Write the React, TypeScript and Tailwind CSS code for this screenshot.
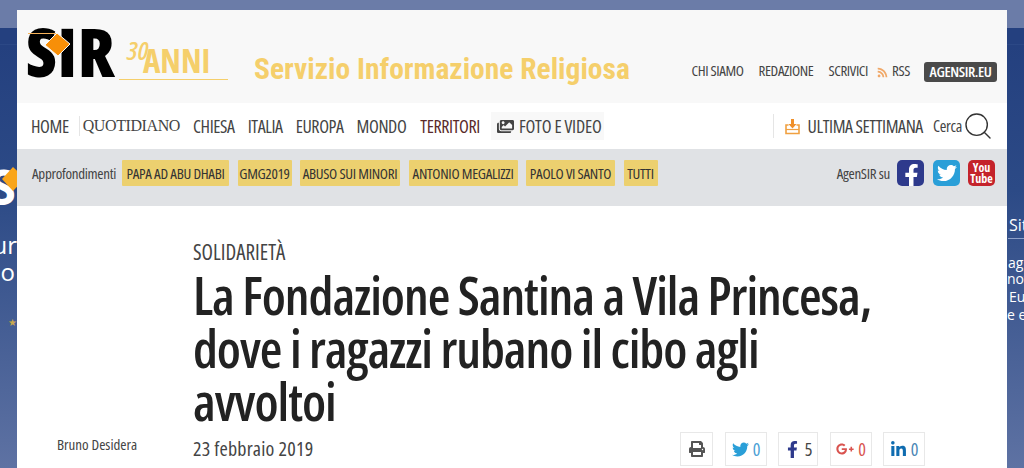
import React from "react";
import { Search } from "lucide-react";
import { FaFacebookF, FaTwitter, FaGooglePlusG, FaLinkedinIn, FaPrint, FaRss, FaImages } from "react-icons/fa";

const cond = "font-['Open_Sans',sans-serif] [font-stretch:75%]";

const chips = [
  { label: "PAPA AD ABU DHABI", w: "w-[107px]" },
  { label: "GMG2019", w: "w-[54px]" },
  { label: "ABUSO SUI MINORI", w: "w-[100px]" },
  { label: "ANTONIO MEGALIZZI", w: "w-[109px]" },
  { label: "PAOLO VI SANTO", w: "w-[89px]" },
  { label: "TUTTI", w: "w-[34px]" },
];

const Logo = () => (
  <div className="relative w-[200px] h-[60px] shrink-0">
    <span className="absolute left-[-2px] top-[-13px] font-extrabold text-[68px] leading-[60px] tracking-[0.7px] text-black font-['Open_Sans',sans-serif] [font-stretch:75%]">SIR</span>
    <div className="absolute left-0 top-[-1px] w-[30px] h-px bg-[#f7b35a]" />
    <svg className="absolute left-[14px] top-[-4px]" width="30" height="30" viewBox="0 0 30 30">
      <path d="M15 3 L28 14 L16 26 L3 15 Z" fill="#f78f08" stroke="#f8f8f8" strokeWidth="1" />
    </svg>
    <span className="absolute left-[99px] top-[3px] text-[26px] leading-[26px] italic font-semibold text-[#f5cf6b] font-['Open_Sans',sans-serif] [font-stretch:75%]">30</span>
    <span className="absolute left-[115px] top-[11px] text-[33px] leading-[32px] font-bold text-[#f5cf6b] font-['Open_Sans',sans-serif] [font-stretch:75%]">ANNI</span>
    <div className="absolute left-[91px] top-[45px] w-[109px] h-px bg-[#f5cf6b]" />
  </div>
);

const TrayIcon = () => (
  <svg className="ml-[11px] shrink-0" width="15" height="17" viewBox="0 0 15 17">
    <path d="M3.5 7 H1 V15.5 H14 V7 H11.5" fill="none" stroke="#f0a040" strokeWidth="1.6" />
    <path d="M1 11.5 H14" stroke="#f0a040" strokeWidth="1.2" />
    <path d="M6 1 H9 V6 H11.5 L7.5 10.5 L3.5 6 H6 Z" fill="#f0902a" />
  </svg>
);

const ShareButton = ({ className, children }: { className: string; children: React.ReactNode }) => (
  <div className={`h-[34px] flex items-center justify-center gap-[4px] border border-[#e8e8e8] bg-white ${className}`}>
    {children}
  </div>
);

const App = () => {
  return (
    <div className="h-[468px] w-[1024px] overflow-hidden bg-[linear-gradient(to_bottom,#6b7ca8_0,#6b7ca8_28px,#24407f_28px,#24407f_44px,#33508c_44px,#24407f_45px,#2c4a86_190px,#5e72a3_468px)]">
      <div className="flex pt-[10px]">
        <div className="relative w-[17px] h-[458px] overflow-hidden font-['Open_Sans',sans-serif] text-white">
          <span className="absolute right-[1px] top-[153px] text-[48px] leading-[48px] font-bold">S</span>
          <svg className="absolute left-[1px] top-[156px]" width="24" height="26" viewBox="0 0 24 26">
            <path d="M12 1 L24 12 L12 25 L1 13 Z" fill="#f9a51a" />
          </svg>
          <span className="absolute right-0 top-[223px] text-[24px] leading-[24px]">ur</span>
          <span className="absolute right-[2px] top-[250px] text-[24px] leading-[24px]">o</span>
          <span className="absolute right-0 top-[306px] text-[10px] leading-[12px] text-[#c9a94f]">★</span>
        </div>
        <div className="w-[990px] h-[458px] bg-white">
          <header className="h-[93px] bg-[#f8f8f8] flex items-start pl-[11px] pr-[10px] pt-[24px]">
            <Logo />
            <div className="ml-[26px] mt-[17px] text-[29.5px] leading-[36px] font-bold text-[#f5cf6b] font-['Roboto',sans-serif] [font-stretch:75%]">Servizio Informazione Religiosa</div>
            <div className={`ml-auto mt-[28px] flex items-center h-[20px] text-[15px] tracking-[-0.4px] text-[#444] ${cond}`}>
              <span className="pb-[3px]">CHI SIAMO</span>
              <span className="ml-[15px] pb-[3px]">REDAZIONE</span>
              <span className="ml-[15px] pb-[3px]">SCRIVICI</span>
              <FaRss className="ml-[9px] text-[11px] text-[#f0a868]" />
              <span className="ml-[4px] pb-[3px]">RSS</span>
              <span className="ml-[14px] w-[73px] h-[20px] pb-[2px] rounded-[3px] bg-[#4a4a4a] text-white font-semibold flex items-center justify-center">AGENSIR.EU</span>
            </div>
          </header>
          <nav className={`h-[46px] flex items-center pl-[14px] pr-[13px] text-[18px] tracking-[-0.4px] text-[#444] ${cond}`}>
            <span>HOME</span>
            <div className="ml-[10px] w-px h-[20px] bg-[#e5e5e5]" />
            <span className="ml-[3px] font-['Liberation_Serif',serif] text-[16px] tracking-[-0.4px]">QUOTIDIANO</span>
            <span className="ml-[13px]">CHIESA</span>
            <span className="ml-[13px]">ITALIA</span>
            <span className="ml-[13px]">EUROPA</span>
            <span className="ml-[13px]">MONDO</span>
            <span className="ml-[14px] text-[#5a2a2a]">TERRITORI</span>
            <div className="ml-[11px] h-[28px] w-[113px] bg-[#f8f8f8] flex items-center pl-[6px]">
              <FaImages className="text-[17px] text-[#444]" />
              <span className="ml-[5px] tracking-[-0.2px]">FOTO E VIDEO</span>
            </div>
            <div className="ml-auto w-px h-[24px] bg-[#e5e5e5]" />
            <TrayIcon />
            <span className="ml-[8px] font-medium">ULTIMA SETTIMANA</span>
            <span className="ml-[10px] text-[16px] tracking-[-0.3px]">Cerca</span>
            <Search className="text-[#333]" size={32} strokeWidth={1.4} absoluteStrokeWidth />
          </nav>
          <div className={`h-[57px] bg-[#e0e2e5] flex items-start pt-[11px] pl-[15px] pr-[12px] text-[15px] tracking-[-0.3px] text-[#444] ${cond}`}>
            <span className="w-[85px] h-[26px] flex items-center whitespace-nowrap">Approfondimenti</span>
            <div className="ml-[5px] flex gap-[8.5px]">
              {chips.map((c) => (
                <span key={c.label} className={`${c.w} h-[26px] rounded-[1px] bg-[#ecd06f] flex items-center justify-center text-[#333]`}>{c.label}</span>
              ))}
            </div>
            <span className="ml-auto h-[26px] flex items-center">AgenSIR su</span>
            <div className="ml-[7px] w-[27px] h-[26px] rounded-[5px] bg-[#2e3a8c] flex items-end justify-end pr-[1px] text-white overflow-hidden"><FaFacebookF className="text-[23px] mb-[-1px]" /></div>
            <div className="ml-[9px] w-[27px] h-[26px] rounded-[5px] bg-[#2a9fd8] flex items-center justify-center text-white"><FaTwitter className="text-[20px]" /></div>
            <div className="ml-[8px] w-[27px] h-[26px] rounded-[5px] bg-[#c4232b] flex flex-col items-center justify-center text-white text-[12px] leading-[11px] tracking-normal font-bold"><span>You</span><span>Tube</span></div>
          </div>
          <div className="flex">
            <div className={`w-[176px] shrink-0 pl-[40px] pt-[230px] text-[15px] text-[#444] leading-[16px] ${cond}`}>Bruno Desidera</div>
            <div className="w-[700px] pt-[35px]">
              <div className={`text-[21px] leading-[22px] text-[#444] ${cond}`}>SOLIDARIETÀ</div>
              <h1 className={`mt-[5px] text-[52px] leading-[53px] font-semibold tracking-[-1.05px] text-[#222] ${cond}`}>La Fondazione Santina a Vila Princesa, dove i ragazzi rubano il cibo agli avvoltoi</h1>
              <div className="mt-[5px] flex items-start">
                <span className={`mt-[7px] text-[20px] leading-[20px] tracking-[0.2px] text-[#444] ${cond}`}>23 febbraio 2019</span>
                <div className={`ml-auto mr-[-32px] flex gap-[11px] text-[18px] ${cond}`}>
                  <ShareButton className="w-[33px]"><FaPrint className="text-[16px] text-[#555]" /></ShareButton>
                  <ShareButton className="ml-[1px] w-[42px] text-[#4aa0d5]"><FaTwitter className="text-[17px] text-[#2a9fd8]" />0</ShareButton>
                  <ShareButton className="w-[40px] text-[#444]"><FaFacebookF className="text-[17px] text-[#2e3a8c]" />5</ShareButton>
                  <ShareButton className="ml-[1px] w-[42px] text-[#d9534f]"><FaGooglePlusG className="text-[18px]" />0</ShareButton>
                  <ShareButton className="w-[42px] text-[#4a86b5]"><FaLinkedinIn className="text-[17px] text-[#0f6cb0]" />0</ShareButton>
                </div>
              </div>
            </div>
          </div>
        </div>
        <div className="relative w-[17px] h-[458px] overflow-hidden whitespace-nowrap font-['Open_Sans',sans-serif] text-white text-[14px] leading-[19px]">
          <span className="absolute left-[2px] top-[206px] text-[16px] font-medium">Sit</span>
          <div className="absolute left-[1px] top-[228px] w-[16px] h-px bg-[#8ea0c8]" />
          <span className="absolute left-[1px] top-[243px]">ag</span>
          <span className="absolute left-0 top-[259px]">nov</span>
          <span className="absolute left-[2px] top-[277px]">Eu</span>
          <span className="absolute left-0 top-[295px]">e el</span>
        </div>
      </div>
    </div>
  );
};

export default App;
